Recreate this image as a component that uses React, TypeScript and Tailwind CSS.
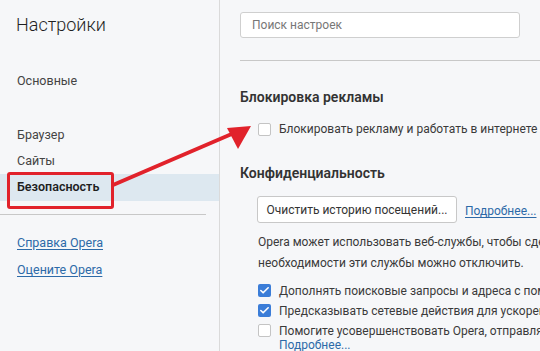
import { Check } from "lucide-react";

const font = { fontFamily: 'Roboto, "Noto Sans", sans-serif' };

function Box({ checked }: { checked?: boolean }) {
  return checked ? (
    <span className="flex h-[13px] w-[13px] shrink-0 items-center justify-center rounded-[2px] bg-[#3b7dd8]">
      <Check className="h-[11px] w-[11px] text-white" strokeWidth={3.5} />
    </span>
  ) : (
    <span className="h-[13px] w-[13px] shrink-0 rounded-[2px] border border-[#c4c4c4] bg-white" />
  );
}

export default function App() {
  return (
    <div
      className="relative flex h-[351px] w-[540px] overflow-hidden bg-[#f6f7f9] text-[12px] text-[#3a3a3a]"
      style={font}
    >
      {/* Sidebar */}
      <aside className="flex w-[220px] shrink-0 flex-col border-r border-[#dadada]">
        <h1 className="pl-4 pt-[11px] text-[18px] leading-[28px] font-light text-[#1f1f1f]">
          Настройки
        </h1>
        <nav className="mt-[29px] flex flex-col text-[12.5px]">
          <div className="flex h-[26px] items-center pl-[17px] text-[#444]">Основные</div>
          <div className="h-[28px]" />
          <div className="flex h-[26px] items-center pl-[17px] text-[#444]">Браузер</div>
          <div className="flex h-[26px] items-center pl-[17px] text-[#444]">Сайты</div>
          <div className="flex h-[27px] items-center bg-[#dde8f0] pl-[17px] font-semibold text-[#1f1f1f]">
            Безопасность
          </div>
        </nav>
        <div className="mt-[13px] h-px w-[206px] bg-[#c8c8c8]" />
        <div className="mt-[19px] flex flex-col gap-[9px] pl-[17px] text-[12.5px] text-[#2d6aa8]">
          <a className="leading-[18px] underline underline-offset-2">Справка Opera</a>
          <a className="leading-[18px] underline underline-offset-2">Оцените Opera</a>
        </div>
      </aside>

      {/* Main */}
      <main className="flex min-w-0 flex-1 flex-col whitespace-nowrap">
        <div className="pl-5 pt-3">
          <div className="flex h-[26px] w-[280px] items-center rounded-[3px] border border-[#cfcfcf] bg-white pl-[11px] text-[#777]">
            Поиск настроек
          </div>
        </div>
        <div className="ml-5 mt-[22px] h-px bg-[#c8c8c8]" />

        <h2 className="mt-[26px] pl-5 text-[14px] leading-[20px] font-semibold text-[#333]">
          Блокировка рекламы
        </h2>
        <label className="mt-[13px] flex h-[18px] items-center gap-[8px] pl-[38px]">
          <Box />
          <span>Блокировать рекламу и работать в интернете в три раза быстрее</span>
        </label>

        <h2 className="mt-[25px] pl-5 text-[14px] leading-[20px] font-semibold text-[#333]">
          Конфиденциальность
        </h2>
        <div className="mt-[13px] flex items-end gap-2 pl-[37px]">
          <button className="h-[27px] w-[200px] rounded-[3px] border border-[#c8c8c8] bg-white text-[#333]">
            Очистить историю посещений...
          </button>
          <a className="pb-[3px] text-[#2d6aa8] underline underline-offset-2">Подробнее...</a>
        </div>
        <p className="mt-[9px] pl-[38px] leading-[21px]">
          Opera может использовать веб-службы, чтобы сделать работу в интернете удобнее. При
          <br />
          необходимости эти службы можно отключить.
        </p>
        <div className="mt-[8px] flex flex-col gap-[3px] pl-[38px]">
          <label className="flex h-[17px] items-center gap-[8px]">
            <Box checked />
            <span>Дополнять поисковые запросы и адреса с помощью службы подсказок</span>
          </label>
          <label className="flex h-[17px] items-center gap-[8px]">
            <Box checked />
            <span>Предсказывать сетевые действия для ускорения загрузки страниц</span>
          </label>
          <label className="flex h-[17px] items-center gap-[8px]">
            <Box />
            <span>Помогите усовершенствовать Opera, отправляя информацию об использовании</span>
          </label>
          <a className="-mt-[3px] pl-[21px] leading-[12px] text-[#2d6aa8] underline underline-offset-2">
            Подробнее...
          </a>
        </div>
      </main>

      {/* Annotation overlay */}
      <div className="pointer-events-none absolute left-[7px] top-[172px] h-[37px] w-[107px] rounded-[3px] border-[3px] border-[#e1222b]" />
      <svg className="pointer-events-none absolute left-0 top-0" width="540" height="351">
        <line x1="113" y1="185" x2="234" y2="133" stroke="#e1222b" strokeWidth="4" strokeLinecap="round" />
        <polygon points="251,126 227,128 238,149" fill="#e1222b" />
      </svg>
    </div>
  );
}
